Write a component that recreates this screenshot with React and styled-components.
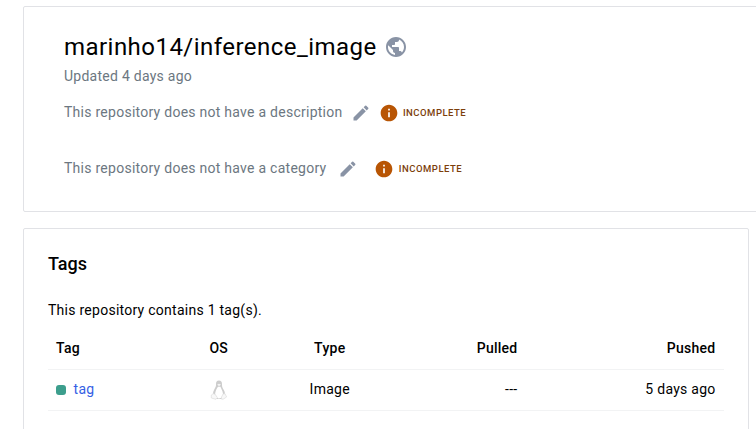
import React from "react";
import styled, { createGlobalStyle } from "styled-components";
import { MdPublic, MdEdit, MdInfo } from "react-icons/md";

const GlobalStyle = createGlobalStyle`
  * { box-sizing: border-box; }
  html, body { margin: 0; background: #fff; overflow: hidden; }
  body {
    font-family: Roboto, "Liberation Sans", sans-serif;
    font-size: 14px;
    line-height: 20px;
    letter-spacing: 0.26px;
    color: #000;
  }
`;

const Page = styled.main`
  height: 429px;
  padding: 6px 0 0 23px;
  overflow: hidden;
  display: flex;
  flex-direction: column;
  gap: 16px;
`;

const Card = styled.section`
  flex: none;
  border: 1px solid #e1e2e6;
  border-radius: 2px;
  background: #fff;
`;

const RepositoryCard = styled(Card)`
  width: 780px;
  height: 206px;
  padding: 24px 40px 0;
`;

const TagsCard = styled(Card)`
  width: 726px;
  height: 240px;
  padding: 23px 24px 0;
`;

const TitleRow = styled.header`
  display: flex;
  align-items: center;
  gap: 7px;
  height: 32px;
`;

const Title = styled.h1`
  margin: 0;
  font-size: 24px;
  font-weight: 400;
  line-height: 32px;
  letter-spacing: 0.46px;
`;

const PublicIcon = styled(MdPublic)`
  flex: none;
  color: #8993a5;
`;

const Updated = styled.p`
  margin: 3px 0 14px;
  color: #6c7781;
`;

const MetaRow = styled.div`
  display: flex;
  align-items: center;
  height: 24px;
  margin-bottom: 32px;
  color: #6c7781;
`;

const EditIcon = styled(MdEdit)`
  flex: none;
  margin: 2px ${(p) => p.$after}px 0 ${(p) => p.$before}px;
  color: #8993a5;
`;

const InfoIcon = styled(MdInfo)`
  flex: none;
  margin-top: 2px;
  color: #b85504;
`;

const Status = styled.span`
  margin: 1px 0 0 4.4px;
  font-size: 9.5px;
  font-weight: 500;
  color: #7c3e0b;
  letter-spacing: 0.5px;
`;

const Heading = styled.h2`
  margin: 0 0 24px;
  font-size: 18px;
  font-weight: 500;
  line-height: 24px;
  letter-spacing: 0;
`;

const Summary = styled.p`
  margin: 0 0 7px;
`;

const Row = styled.div`
  display: grid;
  grid-template-columns: 130px 82px 140px 126px 198px;
  align-items: center;
  height: ${(p) => (p.$head ? 43 : 41)}px;
  border-bottom: 1px solid #f2f3f4;
  font-weight: ${(p) => (p.$head ? 500 : 400)};
`;

const Cell = styled.div`
  display: flex;
  align-items: center;
  justify-content: ${(p) => p.$align || "flex-start"};
  height: 20px;
  padding: 0 8.5px 0 8px;
`;

const BodyCell = styled(Cell)`
  margin-bottom: 2px;
`;

const ActiveMark = styled.span`
  width: 10px;
  height: 10px;
  margin: 1px 7.6px 0 0;
  border-radius: 3px;
  background: #3c9e8d;
`;

const TagLink = styled.a`
  color: #3560e4;
`;

const Penguin = () => (
  <svg width="18" height="20" viewBox="0 0 18 20" aria-label="Linux">
    <path
      d="M9 0.5C6.8 0.5 5.9 2 6 4.2C6.1 6.4 5.5 7 4.5 9C3.5 11 2.7 12.7 3.3 14.5L7 19H11.5L14.8 14.5C15.3 12.5 14.2 10.6 13.2 9C12.2 7.2 12 6.2 12 4.2C12 1.7 11 0.5 9 0.5Z"
      fill="#cdcdcd"
    />
    <path d="M8 6.8C7 8 5.2 11.4 5.1 14C5 16 6.3 18.4 8.8 18.4C11.8 18.4 13.2 16.5 13 14C12.8 11.2 11.2 8.4 10.4 6.8Z" fill="#fff" />
    <path d="M7.2 4.5L9 3.8L11 4.6L9 6.2Z" fill="#f4f4f4" />
    <path
      d="M3.2 13.7L1.3 15V18L6 19.3L7.3 17.6L5.1 14.2ZM13.1 14L11.4 17.2L11.7 19.3L13.5 19L16.6 17L15.1 13.8Z"
      fill="#f8f8f8"
      stroke="#dcdcdc"
      strokeWidth="0.7"
      strokeLinejoin="round"
    />
  </svg>
);

function MetaField({ name, before, after }) {
  return (
    <MetaRow>
      This repository does not have a {name}
      <EditIcon size={20} $before={before} $after={after} />
      <InfoIcon size={20} />
      <Status>INCOMPLETE</Status>
    </MetaRow>
  );
}

export default function App() {
  return (
    <>
      <GlobalStyle />
      <Page>
        <RepositoryCard>
          <TitleRow>
            <Title>marinho14/inference_image</Title>
            <PublicIcon size={24} />
          </TitleRow>
          <Updated>Updated 4 days ago</Updated>
          <MetaField name="description" before={8} after={8} />
          <MetaField name="category" before={12} after={16} />
        </RepositoryCard>
        <TagsCard>
          <Heading>Tags</Heading>
          <Summary>This repository contains 1 tag(s).</Summary>
          <Row $head>
            <Cell>Tag</Cell>
            <Cell $align="center">OS</Cell>
            <Cell $align="center">Type</Cell>
            <Cell $align="flex-end">Pulled</Cell>
            <Cell $align="flex-end">Pushed</Cell>
          </Row>
          <Row>
            <BodyCell>
              <ActiveMark />
              <TagLink>tag</TagLink>
            </BodyCell>
            <Cell $align="center">
              <Penguin />
            </Cell>
            <BodyCell $align="center">Image</BodyCell>
            <BodyCell $align="flex-end">---</BodyCell>
            <BodyCell $align="flex-end">5 days ago</BodyCell>
          </Row>
        </TagsCard>
      </Page>
    </>
  );
}
